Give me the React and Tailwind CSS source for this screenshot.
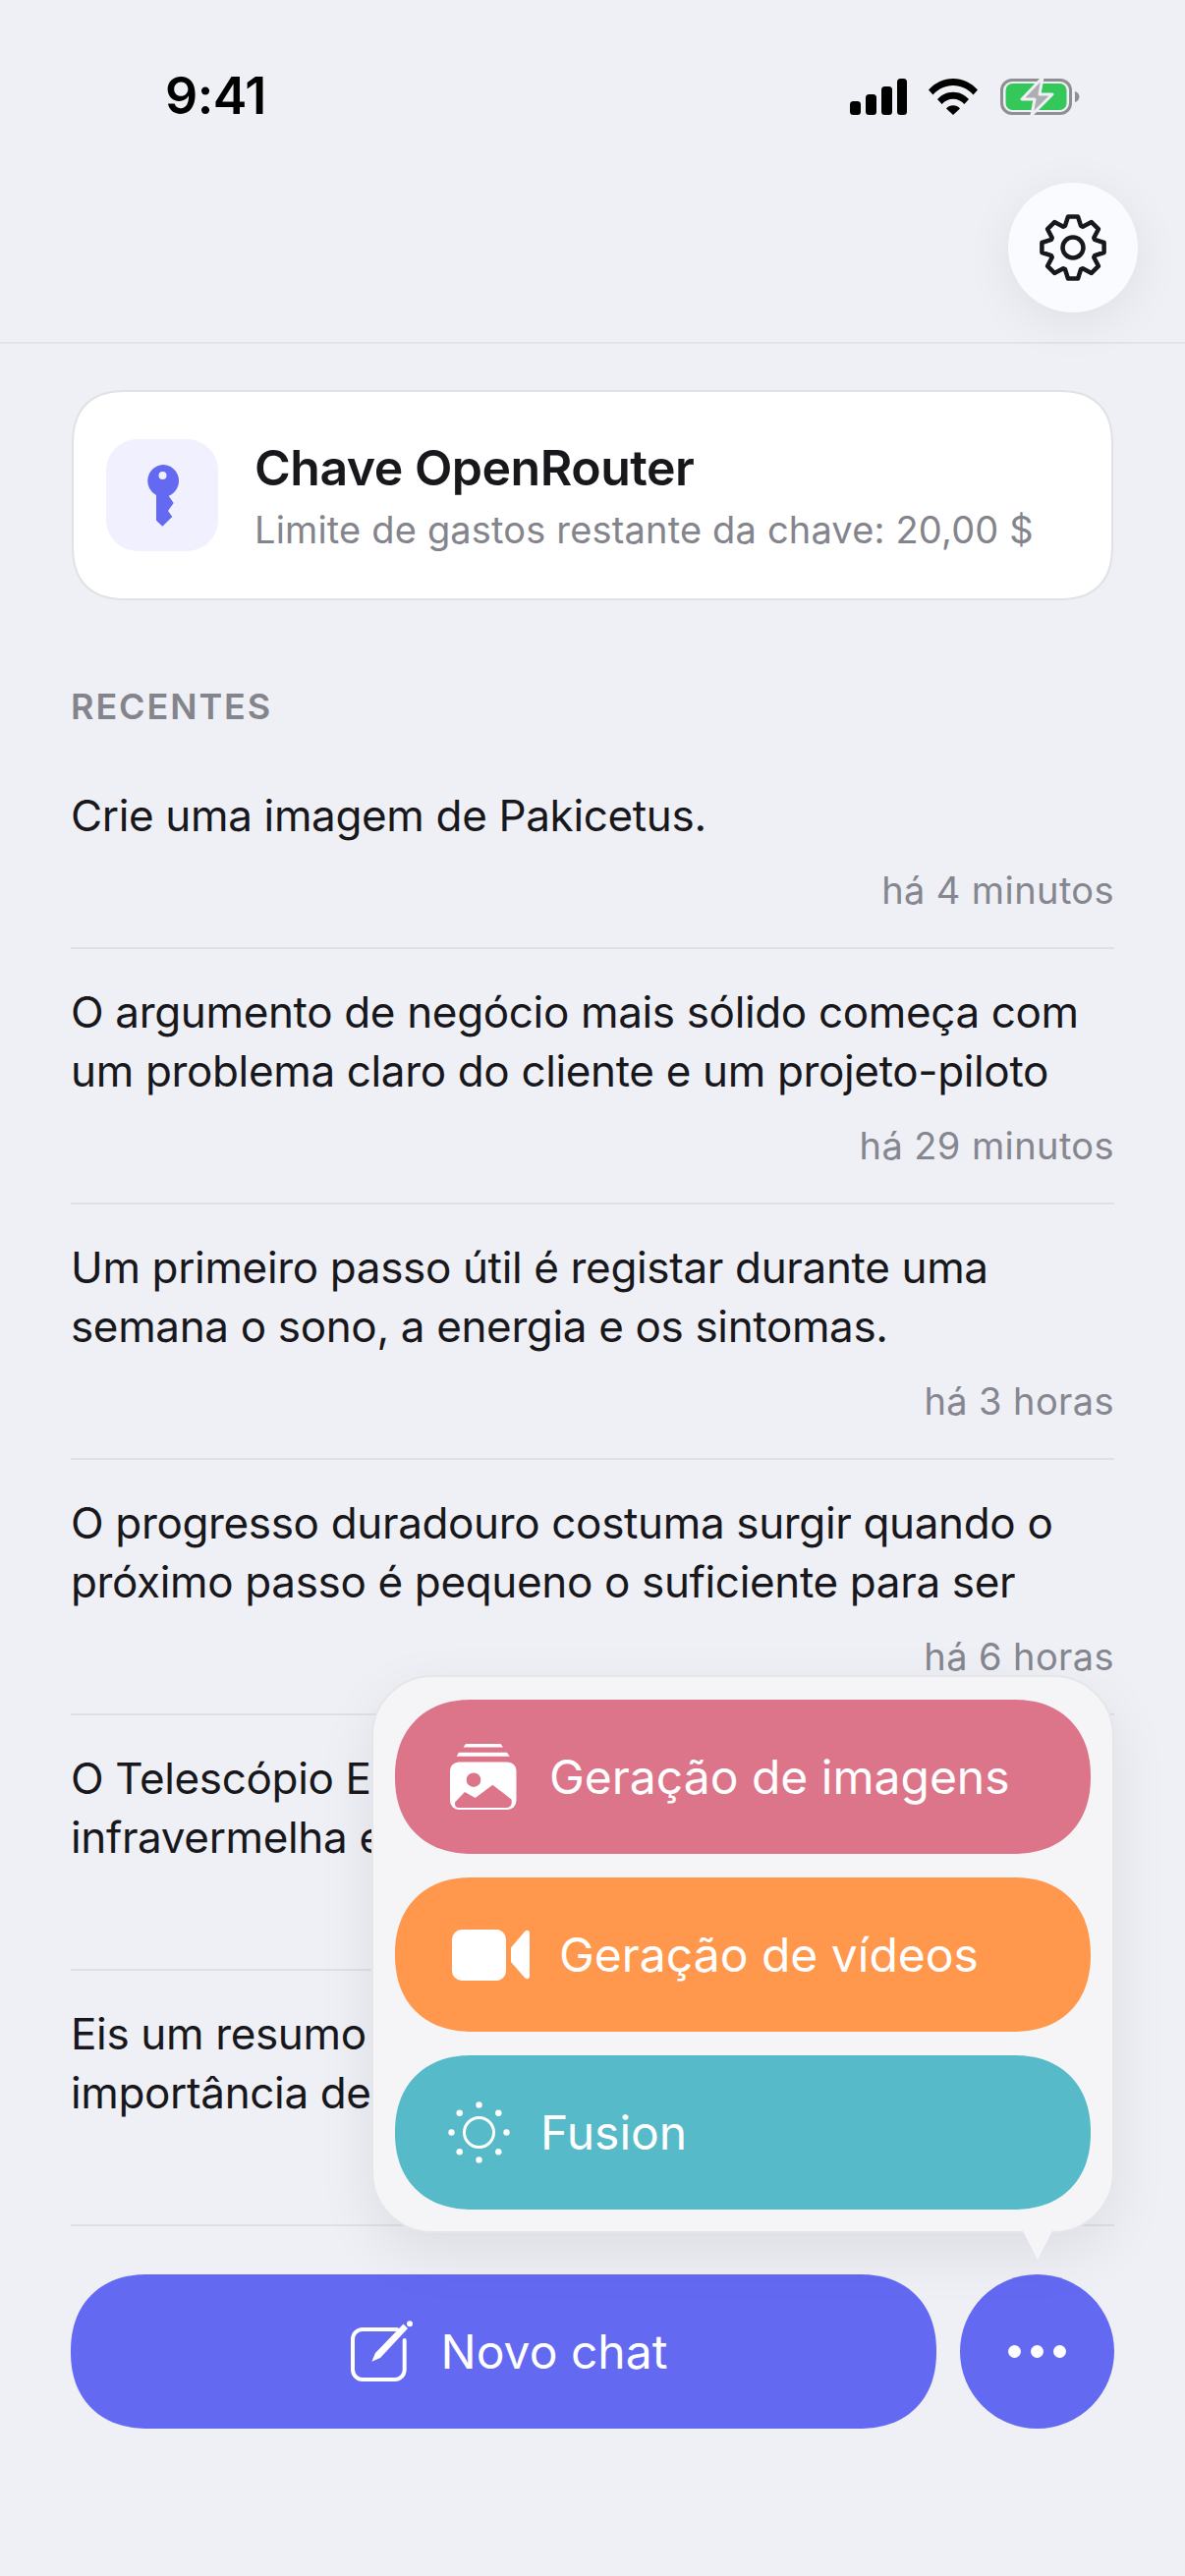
import React from 'react';

const recents = [
  { lines: ['Crie uma imagem de Pakicetus.'], time: 'há 4 minutos' },
  {
    lines: ['O argumento de negócio mais sólido começa com', 'um problema claro do cliente e um projeto-piloto'],
    time: 'há 29 minutos',
  },
  {
    lines: ['Um primeiro passo útil é registar durante uma', 'semana o sono, a energia e os sintomas.'],
    time: 'há 3 horas',
  },
  {
    lines: ['O progresso duradouro costuma surgir quando o', 'próximo passo é pequeno o suficiente para ser'],
    time: 'há 6 horas',
  },
  { lines: ['O Telescópio Espacial', 'infravermelha e'], time: '' },
  { lines: ['Eis um resumo', 'importância de'], time: '' },
];

const SignalIcon = () => (
  <svg width="58" height="37" viewBox="0 0 58 37" fill="#000">
    <rect x="0" y="23" width="11" height="14" rx="3.5" />
    <rect x="16" y="16" width="11" height="21" rx="3.5" />
    <rect x="32" y="8" width="11" height="29" rx="3.5" />
    <rect x="48" y="0" width="10" height="37" rx="3.5" />
  </svg>
);

const WifiIcon = () => (
  <svg width="50" height="37" viewBox="0 0 50 37" fill="#000">
    <path d="M0 11.5C6.5 4.2 15.3 0 25 0s18.5 4.2 25 11.5l-4.500 5C40 10.5 33 7 25 7S10 10.5 4.500 16.500z" />
    <path d="M9 21C13 16.5 18.7 13.7 25 13.7S37 16.5 41 21l-4.600 5C33.5 22.7 29.5 20.7 25 20.7S16.5 22.7 13.600 26z" />
    <path d="M18 30.5C19.8 28.5 22.3 27.3 25 27.3s5.200 1.200 7 3.200L25 37z" />
  </svg>
);

const BatteryIcon = () => (
  <svg width="82" height="41" viewBox="0 0 82 41" fill="none">
    <rect x="1.500" y="3.500" width="70" height="34" rx="10.500" stroke="#8e8e93" strokeWidth="3" />
    <rect x="5.500" y="7" width="62" height="27" rx="7" fill="#34c759" />
    <path d="M76 15c2.500.8 4.500 3 4.500 5.500S78.500 25.200 76 26z" fill="#8e8e93" />
    <path d="M43 1L22 23h13l-3 16 21-21H40z" fill="#aeaeb2" stroke="#eff0f5" strokeWidth="3" strokeLinejoin="round" />
  </svg>
);

// 8 toothed gear outline, top tooth pointing straight up
const gearPath = () => {
  const point = (radius, degrees) => {
    const angle = ((degrees - 90) * Math.PI) / 180;
    return `${(36 + radius * Math.cos(angle)).toFixed(2)} ${(36 + radius * Math.sin(angle)).toFixed(2)}`;
  };
  const parts = [];
  for (let i = 0; i < 8; i += 1) {
    const center = i * 45;
    parts.push(point(23.5, center - 20), point(32, center - 9), point(32, center + 9), point(23.5, center + 20));
  }
  return `M${parts.join('L')}Z`;
};

const GearIcon = () => (
  <svg width="72" height="72" viewBox="0 0 72 72" fill="none" stroke="#17171c" strokeWidth="4.500" strokeLinejoin="round">
    <path d={gearPath()} />
    <circle cx="36" cy="36" r="10.500" />
  </svg>
);

const KeyIcon = () => (
  <svg width="33" height="63" viewBox="0 0 33 63" fill="#6469f2">
    <path
      fillRule="evenodd"
      d="M16.500 0A16.500 16.500 0 0 1 22.700 31.800L27.700 39 22 47l4.300 6-10 9.700L10 56.700V31A16.500 16.500 0 0 1 16.500 0zm0 7a4 4 0 1 0 0 8 4 4 0 0 0 0-8z"
    />
  </svg>
);

const ImagesIcon = () => (
  <svg width="68" height="67" viewBox="0 0 68 67">
    <path d="M16 0h35.500l2.500 3.500H13.500z" fill="#fff" />
    <path d="M9 8.700h49l2.700 4H6.700z" fill="#fff" />
    <rect x="0" y="18.400" width="67.500" height="48.500" rx="9" fill="#fff" />
    <circle cx="24" cy="36.700" r="7.300" fill="#dd758a" />
    <path d="M5 59.500L15 49l10.700 6 17.700-13.300L62.700 56.700V60a5 5 0 0 1-5 5H9a4 4 0 0 1-4-4z" fill="#dd758a" />
  </svg>
);

const VideoIcon = () => (
  <svg width="79" height="52" viewBox="0 0 79 52" fill="#fff">
    <rect x="0" y="0" width="55" height="52" rx="10" />
    <path d="M60 18.500L74 2c2-2 5-1.500 5 2v43c0 3.500-3 4-5 2L60 33z" />
  </svg>
);

const SunIcon = () => (
  <svg width="63" height="63" viewBox="0 0 63 63" fill="#fff">
    <circle cx="31.500" cy="31.500" r="15" fill="none" stroke="#fff" strokeWidth="3" />
    <circle cx="31.500" cy="3.500" r="3.200" />
    <circle cx="31.500" cy="59.500" r="3.200" />
    <circle cx="3.500" cy="31.500" r="3.200" />
    <circle cx="59.500" cy="31.500" r="3.200" />
    <circle cx="11.700" cy="11.700" r="3.200" />
    <circle cx="51.300" cy="11.700" r="3.200" />
    <circle cx="11.700" cy="51.300" r="3.200" />
    <circle cx="51.300" cy="51.300" r="3.200" />
  </svg>
);

const ComposeIcon = () => (
  <svg width="64" height="63" viewBox="0 0 64 63" fill="none">
    <path
      d="M47 9H12A10 10 0 0 0 2 19v31a10 10 0 0 0 10 10h32.700a10 10 0 0 0 10-10V20"
      stroke="#fff"
      strokeWidth="4"
      strokeLinecap="round"
    />
    <path d="M21.300 41.700L25 33 53.500 3.500l4.500 4.500L30 38z" fill="#fff" />
    <circle cx="60" cy="3.300" r="3" fill="#fff" />
  </svg>
);

const actions = [
  { label: 'Geração de imagens', icon: ImagesIcon, className: 'bg-[#dd758a] pl-[56px] gap-[33px]' },
  { label: 'Geração de vídeos', icon: VideoIcon, className: 'bg-[#ff974d] pl-[58px] gap-[30px]' },
  { label: 'Fusion', icon: SunIcon, className: 'bg-[#56bac8] pl-[54px] gap-[31px]' },
];

const App = () => {
  return (
    <div className="flex flex-col w-[1206px] h-[2622px] overflow-hidden bg-[#eff0f5] font-['Inter',sans-serif] text-[#17171c]">
      {/* Status bar */}
      <div className="flex justify-between items-start h-[186px] pt-[78px] pl-[168px] pr-[106px]">
        <span className="text-[52px] leading-[39px] font-semibold text-black tracking-[-0.5px]">9:41</span>
        <div className="flex items-center">
          <SignalIcon />
          <div className="ml-[22px]">
            <WifiIcon />
          </div>
          <div className="ml-[23px]">
            <BatteryIcon />
          </div>
        </div>
      </div>

      {/* Header */}
      <div className="flex justify-end pr-[48px] pb-[30px] border-b-2 border-[#e2e3e9]">
        <button className="flex items-center justify-center w-[132px] h-[132px] rounded-full bg-[#fafbfe] shadow-[0_10px_50px_rgba(0,0,0,0.07)]">
          <GearIcon />
        </button>
      </div>

      <div className="flex-1 min-h-0 overflow-hidden px-[72px] pt-[47px]">
        {/* Key card */}
        <div className="flex items-center h-[214px] mx-[1px] pl-[33px] bg-white border-2 border-[#e1e2e6] rounded-[56px] [corner-shape:superellipse(1.3)]">
          <div className="flex items-center justify-center w-[114px] h-[114px] rounded-[32px] bg-[#f0f0fe]">
            <KeyIcon />
          </div>
          <div className="ml-[37px] mb-[3px]">
            <div className="text-[50px] leading-[64px] font-semibold tracking-[-0.5px]">Chave OpenRouter</div>
            <div className="mt-[8px] text-[38px] leading-[46px] tracking-[0.17px] text-[#83848c]">
              Limite de gastos restante da chave: 20,00 $
            </div>
          </div>
        </div>

        <div className="mt-[88px] mb-[27px] text-[36px] leading-[40px] font-semibold tracking-[1.9px] text-[#83848c]">
          RECENTES
        </div>

        {recents.map((item) => (
          <div key={item.lines[0]} className="pt-[34px] pb-[33px] border-b-2 border-[#dfe0e6]">
            {item.lines.map((line) => (
              <div key={line} className="text-[44px] leading-[60px] tracking-[-0.35px] whitespace-nowrap">
                {line}
              </div>
            ))}
            <div className="mt-[21px] h-[50px] text-[38px] leading-[50px] tracking-[0.4px] text-right text-[#85868f]">
              {item.time}
            </div>
          </div>
        ))}
      </div>

      {/* Bottom actions */}
      <div className="relative flex gap-[24px] px-[72px] pb-[150px]">
        <button className="flex flex-1 items-center justify-center gap-[28px] h-[157px] pl-[11px] rounded-[78px] [corner-shape:superellipse(1.15)] bg-[#6469f2] text-[48px] text-white">
          <ComposeIcon />
          Novo chat
        </button>
        <button className="flex items-center justify-center gap-[10px] w-[157px] h-[157px] rounded-full bg-[#6469f2]">
          <span className="w-[13px] h-[13px] rounded-full bg-white" />
          <span className="w-[13px] h-[13px] rounded-full bg-white" />
          <span className="w-[13px] h-[13px] rounded-full bg-white" />
        </button>

        {/* Menu popover */}
        <div className="absolute right-[72px] bottom-full mb-[42px] flex flex-col gap-[24px] w-[756px] px-[22px] pt-[23px] pb-[22px] rounded-[62px] bg-[#f5f5f8] border-2 border-[#e5e6ea] shadow-[0_20px_60px_rgba(0,0,0,0.08)]">
          {actions.map((action) => {
            const IconComponent = action.icon;

            return (
              <button
                key={action.label}
                className={`flex items-center h-[157px] rounded-[78px] [corner-shape:superellipse(1.15)] text-[48px] text-white ${action.className}`}
              >
                <IconComponent />
                {action.label}
              </button>
            );
          })}
          <svg className="absolute right-[61px] top-full" width="30" height="29" viewBox="0 0 30 29" fill="#f5f5f8">
            <path d="M0 0h30L15 29z" />
          </svg>
        </div>
      </div>
    </div>
  );
};

export default App;
